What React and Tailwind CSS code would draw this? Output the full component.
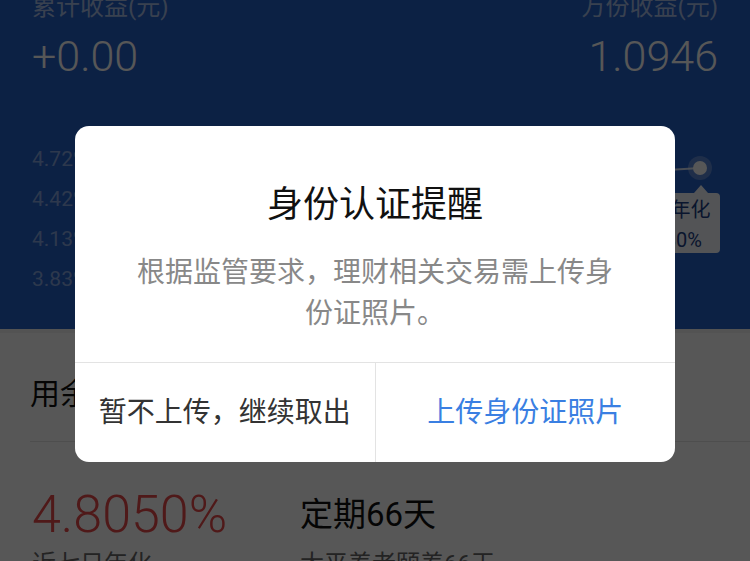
import React from "react";

const ticks = ["4.72%", "4.42%", "4.13%", "3.83%"];

const App = () => {
  return (
    <div className="relative w-[750px] h-[561px] overflow-hidden bg-white font-['Roboto','Noto_Sans_CJK_SC',sans-serif]">
      {/* Blue header */}
      <div className="h-[329px] bg-[#2460c8] px-[32px] flex flex-col">
        <div className="flex justify-between -mt-[9px] text-[24px] leading-[32px] text-white/60">
          <span>累计收益(元)</span>
          <span>万份收益(元)</span>
        </div>
        <div className="flex justify-between mt-[8px] text-[43px] leading-[50px] font-light text-white">
          <span>+0.00</span>
          <span>1.0946</span>
        </div>

        {/* Chart */}
        <div className="relative mt-[66px] h-[170px]">
          <div className="flex flex-col gap-[16px] text-[21px] leading-[24px] text-white/45">
            {ticks.map((t) => (
              <span key={t}>{t}</span>
            ))}
          </div>
          <svg className="absolute left-[500px] top-0 w-[180px] h-[60px]" viewBox="0 0 180 60">
            <polyline points="0,27 120,24 168,21" fill="none" stroke="rgba(255,255,255,0.8)" strokeWidth="2" />
            <circle cx="168" cy="21" r="12" fill="rgba(255,255,255,0.25)" />
            <circle cx="168" cy="21" r="7" fill="#ffffff" />
          </svg>
          {/* Tooltip */}
          <div className="absolute right-[-2px] top-[46px] w-[90px] h-[60px] rounded-[4px] bg-white/95 text-[#1d3f86] text-[20px] leading-[30px] text-center pt-[2px]">
            <div className="absolute right-[12px] -top-[8px] w-0 h-0 border-x-[7px] border-x-transparent border-b-[8px] border-b-white/95" />
            <div>7日年化</div>
            <div>4.80%</div>
          </div>
        </div>
      </div>

      {/* Lower page */}
      <div className="bg-[#f2f2f2] h-[4px]" />
      <div className="bg-white">
        <div className="ml-[30px] h-[109px] border-b border-[#e5e5e5] flex items-center text-[30px] text-[#111] pt-[12px]">
          用余额宝转入赚收益
        </div>
        <div className="flex px-[32px] pt-[46px]">
          <div className="w-[268px]">
            <div className="text-[52px] leading-[54px] font-light text-[#e84a4a]">4.8050%</div>
            <div className="text-[24px] leading-[32px] text-[#666] mt-[6px]">近七日年化</div>
          </div>
          <div>
            <div className="text-[33px] leading-[54px] text-[#111]">定期66天</div>
            <div className="text-[24px] leading-[32px] text-[#666] mt-[6px]">太平养老颐养66天</div>
          </div>
        </div>
      </div>

      {/* Mask + dialog */}
      <div className="absolute inset-0 bg-black/[0.66] flex justify-center items-start pt-[126px]">
        <div className="w-[600px] bg-white rounded-[14px] overflow-hidden">
          <div className="pt-[57px] pb-[28px] px-[56px] text-center">
            <div className="text-[36px] leading-[44px] text-[#111]">身份认证提醒</div>
            <div className="mt-[25px] text-[28px] leading-[41px] text-[#888]">
              根据监管要求，理财相关交易需上传身份证照片。
            </div>
          </div>
          <div className="flex h-[100px] border-t border-[#e3e3e3] text-[28px]">
            <button className="flex-1 flex items-center justify-center text-[#333] border-r border-[#e3e3e3]">
              暂不上传，继续取出
            </button>
            <button className="flex-1 flex items-center justify-center text-[#3a7fe2]">
              上传身份证照片
            </button>
          </div>
        </div>
      </div>
    </div>
  );
};

export default App;
